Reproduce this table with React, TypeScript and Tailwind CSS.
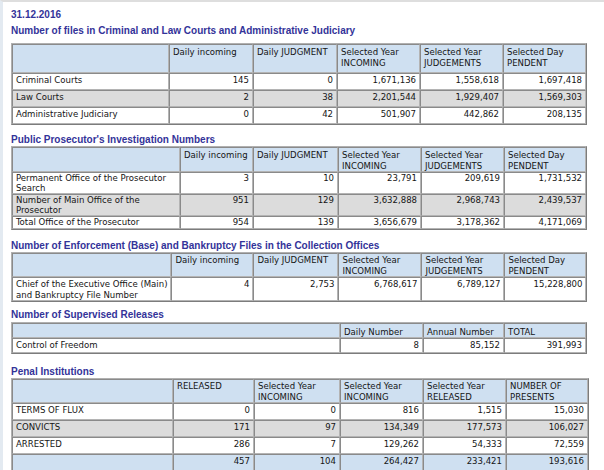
import React from "react";

type Row = { cells: string[]; tone?: "white" | "gray" | "blue" };

const cellFont = {
  fontFamily: '"DejaVu Sans Condensed", "Liberation Sans", sans-serif',
};

function DataTable({
  cols,
  header,
  rows,
  headerH,
  rowH,
  headPad = "pt-[1px]",
  rowLeading = "leading-[11px]",
}: {
  cols: number[];
  header: string[][];
  rows: Row[];
  headerH: string;
  rowH: string;
  headPad?: string;
  rowLeading?: string;
}) {
  const cellBorder =
    "border border-t-[#8a8a8a] border-l-[#8a8a8a] border-r-[#b4b4b4] border-b-[#b4b4b4]";
  return (
    <table
      className="table-fixed border-separate border-spacing-0 border border-t-[#b0b0b0] border-l-[#b0b0b0] border-r-[#7c7c7c] border-b-[#7c7c7c] text-[9.5px] leading-[11px] text-[#151515]"
      style={cellFont}
    >
      <colgroup>
        {cols.map((w, i) => (
          <col key={i} style={{ width: w }} />
        ))}
      </colgroup>
      <tbody>
        <tr className={`bg-[#cfe0f1] ${headerH}`}>
          {header.map((lines, i) => (
            <td
              key={i}
              className={`${cellBorder} whitespace-nowrap px-[3px] ${headPad} align-top`}
            >
              {lines.map((l, j) => (
                <div key={j}>{l}</div>
              ))}
            </td>
          ))}
        </tr>
        {rows.map((r, i) => (
          <tr
            key={i}
            className={`${rowH} ${
              r.tone === "gray"
                ? "bg-[#dcdcdc]"
                : r.tone === "blue"
                ? "bg-[#cfe0f1]"
                : "bg-white"
            }`}
          >
            {r.cells.map((c, j) => (
              <td
                key={j}
                className={`${cellBorder} whitespace-nowrap px-[3px] align-top ${rowLeading} ${
                  j === 0 ? "text-left" : "text-right"
                }`}
              >
                {c.split("\n").map((l, k) => (
                  <div key={k}>{l}</div>
                ))}
              </td>
            ))}
          </tr>
        ))}
      </tbody>
    </table>
  );
}

function Heading({ children, className }: { children: React.ReactNode; className?: string }) {
  return (
    <div
      className={`text-[10px] font-bold leading-[12px] text-[#333399] ${className ?? ""}`}
      style={{ fontFamily: '"Liberation Sans", Arial, sans-serif' }}
    >
      {children}
    </div>
  );
}

const stdHeader = [
  [""],
  ["Daily incoming"],
  ["Daily JUDGMENT"],
  ["Selected Year", "INCOMING"],
  ["Selected Year", "JUDGEMENTS"],
  ["Selected Day", "PENDENT"],
];

export default function App() {
  return (
    <div className="min-h-[470px] w-[604px] border-l-[3px] border-t-2 border-l-[#e3eaf1] border-t-[#dedede] bg-white pl-[8px] pt-[5px]">
      <Heading className="mt-[2px]">31.12.2016</Heading>
      <Heading className="mt-[4px]">
        Number of files in Criminal and Law Courts and Administrative Judiciary
      </Heading>
      <div className="mt-[6px]">
        <DataTable
          cols={[157, 84, 84, 83, 83, 83]}
          header={stdHeader}
          headerH="h-[29px]"
          rowH="h-[17px]"
          rows={[
            { cells: ["Criminal Courts", "145", "0", "1,671,136", "1,558,618", "1,697,418"] },
            { cells: ["Law Courts", "2", "38", "2,201,544", "1,929,407", "1,569,303"], tone: "gray" },
            { cells: ["Administrative Judiciary", "0", "42", "501,907", "442,862", "208,135"] },
          ]}
        />
      </div>

      <Heading className="mt-[9px]">Public Prosecutor's Investigation Numbers</Heading>
      <div className="mt-0">
        <DataTable
          cols={[168, 73, 85, 83, 83, 82]}
          header={stdHeader}
          headerH="h-[23px]"
          rowH="h-[13px]"
          rowLeading="leading-[10px]"
          rows={[
            { cells: ["Permanent Office of the Prosecutor\nSearch", "3", "10", "23,791", "209,619", "1,731,532"] },
            { cells: ["Number of Main Office of the\nProsecutor", "951", "129", "3,632,888", "2,968,743", "2,439,537"], tone: "gray" },
            { cells: ["Total Office of the Prosecutor", "954", "139", "3,656,679", "3,178,362", "4,171,069"] },
          ]}
        />
      </div>

      <Heading className="mt-[10px]">
        Number of Enforcement (Base) and Bankruptcy Files in the Collection Offices
      </Heading>
      <div className="mt-0">
        <DataTable
          cols={[159, 82, 85, 83, 83, 82]}
          header={stdHeader}
          headerH="h-[24px]"
          headPad="pt-0"
          rowH="h-[13px]"
          rows={[
            { cells: ["Chief of the Executive Office (Main)\nand Bankruptcy File Number", "4", "2,753", "6,768,617", "6,789,127", "15,228,800"] },
          ]}
        />
      </div>

      <Heading className="mt-[7px]">Number of Supervised Releases</Heading>
      <div className="mt-[1px]">
        <DataTable
          cols={[328, 83, 81, 82]}
          header={[[""], ["Daily Number"], ["Annual Number"], ["TOTAL"]]}
          headerH="h-[14px]"
          headPad="pt-[2px]"
          rowH="h-[15px]"
          rows={[{ cells: ["Control of Freedom", "8", "85,152", "391,993"] }]}
        />
      </div>

      <Heading className="mt-[12px]">Penal Institutions</Heading>
      <div className="mt-0">
        <DataTable
          cols={[161, 81, 86, 83, 83, 82]}
          header={[
            [""],
            ["RELEASED"],
            ["Selected Year", "INCOMING"],
            ["Selected Year", "INCOMING"],
            ["Selected Year", "RELEASED"],
            ["NUMBER OF", "PRESENTS"],
          ]}
          headerH="h-[22px]"
          headPad="pt-0"
          rowH="h-[17px]"
          rows={[
            { cells: ["TERMS OF FLUX", "0", "0", "816", "1,515", "15,030"] },
            { cells: ["CONVICTS", "171", "97", "134,349", "177,573", "106,027"], tone: "gray" },
            { cells: ["ARRESTED", "286", "7", "129,262", "54,333", "72,559"] },
            { cells: ["", "457", "104", "264,427", "233,421", "193,616"], tone: "blue" },
          ]}
        />
      </div>
    </div>
  );
}
